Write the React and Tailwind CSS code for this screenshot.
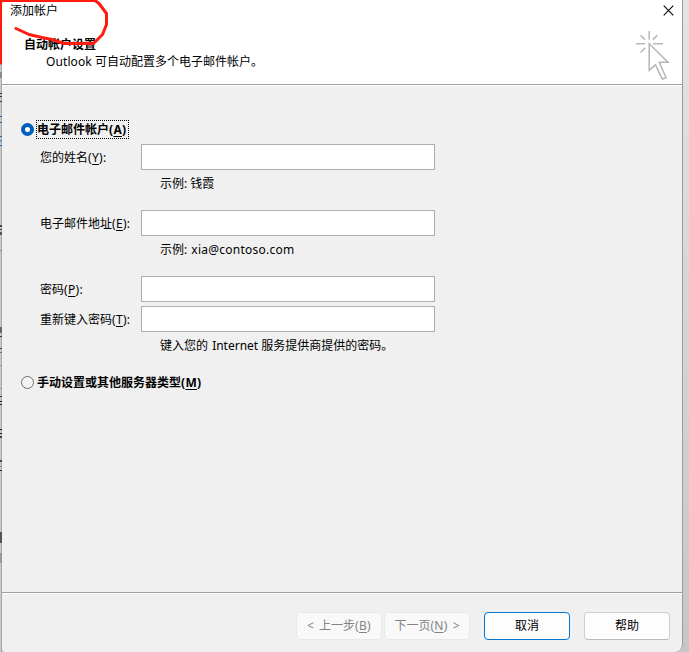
import React, { useState } from 'react';

const SCRAPS = [
    { y: 72, h: 6, color: '#8a8a8a' },
    { y: 93, h: 1, color: '#333333' },
    { y: 96, h: 1, color: '#333333' },
    { y: 101, h: 1, color: '#333333' },
    { y: 116, h: 1, color: '#1b6fb8' },
    { y: 122, h: 1, color: '#1b6fb8' },
    { y: 136, h: 1, color: '#1b6fb8' },
    { y: 140, h: 2, color: '#5a9bd0' },
    { y: 145, h: 1, color: '#1b6fb8' },
    { y: 225, h: 2, color: '#444444' },
    { y: 229, h: 1, color: '#444444' },
    { y: 232, h: 3, color: '#555555' },
    { y: 250, h: 1, color: '#888888' },
    { y: 327, h: 6, color: '#666666' },
    { y: 336, h: 1, color: '#333333' },
    { y: 348, h: 1, color: '#444444' },
    { y: 352, h: 1, color: '#777777' },
    { y: 365, h: 1, color: '#999999' },
    { y: 388, h: 1, color: '#999999' },
    { y: 396, h: 1, color: '#333333' },
    { y: 401, h: 1, color: '#222222' },
    { y: 404, h: 1, color: '#222222' },
    { y: 429, h: 1, color: '#222222' },
    { y: 433, h: 1, color: '#222222' },
    { y: 436, h: 2, color: '#444444' },
    { y: 460, h: 2, color: '#444444' },
    { y: 466, h: 1, color: '#888888' },
    { y: 470, h: 1, color: '#222222' },
    { y: 532, h: 11, color: '#555555' },
    { y: 553, h: 10, color: '#999999' },
];

const Backdrop = () => (
    <svg className="w-[2px] h-[652px] shrink-0" viewBox="0 0 2 652" shapeRendering="crispEdges">
        <rect width="2" height="652" fill="#c9c9c9" />
        <rect x="1" width="1" height="652" fill="#a9a9a9" />
        {SCRAPS.map((s) => (
            <rect key={s.y} y={s.y} width="2" height={s.h} fill={s.color} />
        ))}
    </svg>
);

const CloseIcon = () => (
    <svg className="w-[11px] h-[11px]" viewBox="0 0 11 11" fill="none" stroke="#111" strokeWidth="1.2">
        <path d="M.7.7l9.6 9.6M10.3.7L.7 10.3" />
    </svg>
);

const ClickIcon = () => (
    <svg className="w-[34px] h-[50px]" viewBox="0 0 34 50" fill="none" stroke="#b9b9b9" strokeWidth="1.6">
        <path d="M13.2 1v8.500M0 13.800h9M17 13.800h10M4.500 5.300L9 9.600M21.300 5.300l-4.500 4.300M4.500 22.500l4.800-4.800" />
        <path d="M13.200 13.800l18.800 18.500h-8.700L30 47.500l-3.700 1.700L19.500 34.800l-6.300 5.400z" />
    </svg>
);

const Key = ({ children }) => (
    <span className="tracking-[0.3px]">(<span className="underline underline-offset-2">{children}</span>)</span>
);

const Field = ({ label, hotkey, type = 'text', value, onChange }) => (
    <label className="flex h-[26px]">
        <span className="w-[101px] leading-[27px] whitespace-nowrap">
            {label}<Key>{hotkey}</Key>:
        </span>
        <input
            type={type}
            value={value}
            onChange={onChange}
            className="w-[294px] h-[26px] border border-[#abadb3] bg-white px-1 outline-none"
        />
    </label>
);

const Hint = ({ children }) => (
    <p className="pl-[120px] h-[26px] leading-[27px] whitespace-nowrap">{children}</p>
);

const Radio = ({ checked, onSelect, label, hotkey }) => (
    <button type="button" onClick={onSelect} className="flex items-center h-[19px] font-bold whitespace-nowrap">
        <span
            className={`w-[13px] h-[13px] mr-[2px] rounded-full shrink-0 ${checked ? 'border-4 border-[#005fb8] bg-white' : 'border border-[#707070] bg-[#f3f3f3]'}`}
        />
        <span className={`h-[19px] leading-[17px] border ${checked ? 'pr-[2px] border-dotted border-black' : 'border-transparent'}`}>
            {label}<Key>{hotkey}</Key>
        </span>
    </button>
);

const App = () => {
    const [mode, setMode] = useState('email');
    const [form, setForm] = useState({ name: '', email: '', password: '', confirm: '' });

    const handleChange = (key) => (e) => {
        setForm(prev => ({ ...prev, [key]: e.target.value }));
    };

    return (
        <div className="relative flex w-[689px] h-[652px] overflow-hidden bg-[#c9c9c9] text-[12px] text-black font-['Noto_Sans','Noto_Sans_CJK_SC',sans-serif]">
            <Backdrop />
            <div className="flex flex-col w-[681px] h-[652px] bg-[#f0f0f0] border-r border-[#9c9c9c] rounded-br-lg rounded-bl-sm">
                <header className="h-[84px] bg-white">
                    <div className="flex justify-between h-[21px] pl-[8px] pr-[8px]">
                        <span className="leading-[21px]">添加帐户</span>
                        <button type="button" className="pt-[4px] h-[16px]"><CloseIcon /></button>
                    </div>
                    <div className="flex justify-between pl-[22px] pr-[12px]">
                        <div className="pt-[15px]">
                            <h1 className="font-bold leading-[17px]">自动帐户设置</h1>
                            <p className="pl-[22px] leading-[17px]"><span className="tracking-[0.1px]">Outlook</span> 可自动配置多个电子邮件帐户。</p>
                        </div>
                        <div className="pt-[9px]"><ClickIcon /></div>
                    </div>
                </header>
                <main className="flex-1 border-t border-[#a0a0a0]">
                    <div className="border-t border-white pt-[34px] pl-[19px]">
                        <Radio checked={mode === 'email'} onSelect={() => setMode('email')} label="电子邮件帐户" hotkey="A" />
                        <div className="pl-[19px] pt-[5px]">
                            <Field label="您的姓名" hotkey="Y" value={form.name} onChange={handleChange('name')} />
                            <Hint>示例: 钱霞</Hint>
                            <div className="pt-[14px]">
                                <Field label="电子邮件地址" hotkey="E" value={form.email} onChange={handleChange('email')} />
                                <Hint>示例: <span className="ml-px tracking-[0.25px]">xia@contoso.com</span></Hint>
                            </div>
                            <div className="flex flex-col gap-1 pt-[14px]">
                                <Field label="密码" hotkey="P" type="password" value={form.password} onChange={handleChange('password')} />
                                <Field label="重新键入密码" hotkey="T" type="password" value={form.confirm} onChange={handleChange('confirm')} />
                            </div>
                            <Hint>键入您的 <span className="ml-px">Internet</span> 服务提供商提供的密码。</Hint>
                        </div>
                        <div className="pt-[15px]">
                            <Radio checked={mode === 'manual'} onSelect={() => setMode('manual')} label="手动设置或其他服务器类型" hotkey="M" />
                        </div>
                    </div>
                </main>
                <footer className="h-[60px] border-t border-[#a0a0a0]">
                    <div className="flex justify-end border-t border-white pt-[18px] pr-[12px]">
                        <button type="button" disabled className="w-[86px] h-[28px] mr-[2px] rounded border border-[#e8e8e8] bg-[#f9f9f9] text-[#838383] [word-spacing:2px]">
                            &lt; 上一步<Key>B</Key>
                        </button>
                        <button type="button" disabled className="w-[86px] h-[28px] mr-[14px] rounded border border-[#e8e8e8] bg-[#f9f9f9] text-[#838383] [word-spacing:2px]">
                            下一页<Key>N</Key> &gt;
                        </button>
                        <button type="button" className="w-[86px] h-[28px] mr-[14px] rounded border border-[#0078d4] bg-[#fdfdfd]">取消</button>
                        <button type="button" className="w-[86px] h-[28px] rounded border border-[#d0d0d0] border-b-[#bababa] bg-[#fdfdfd]">帮助</button>
                    </div>
                </footer>
            </div>
            <div className="flex-1 bg-linear-to-b from-[#e4e4e4] to-[#c6c6c6]" />
            <svg className="absolute left-0 top-0 w-[120px] h-[70px] pointer-events-none" viewBox="0 0 120 70" fill="none" stroke="#ff1c0f" strokeWidth="3" strokeLinecap="round" strokeLinejoin="round">
                <path d="M.5 63V1.500C2 0 4 .5 8 .5H95l4 3 7.500 10v11l-4 10-4 4-5 5H64l-12-4-10-2-13-3-13-6" />
            </svg>
        </div>
    );
};

export default App;
